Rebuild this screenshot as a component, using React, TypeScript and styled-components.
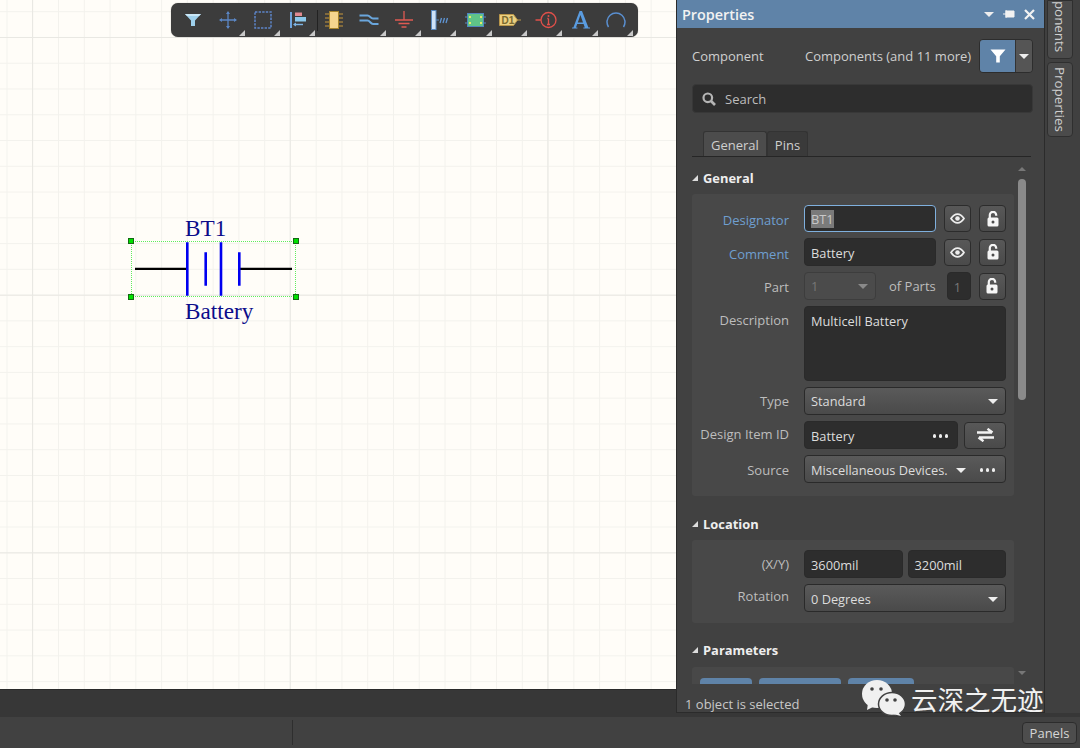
import React from "react";
import styled, { createGlobalStyle } from "styled-components";

const Global = createGlobalStyle`
  html, body { margin: 0; padding: 0; width: 1080px; height: 748px; overflow: hidden; background: #414141; }
  * { box-sizing: border-box; }
  body { font-family: "Open Sans", "Noto Sans", sans-serif; font-size: 13px; color: #d4d4d4; }
`;

const Page = styled.div`
  position: relative;
  width: 1080px;
  height: 748px;
  display: flex;
  flex-direction: column;
  overflow: hidden;
`;
const Main = styled.div`
  display: flex;
  height: 713px;
  flex: none;
`;
const LeftCol = styled.div`
  width: 676px;
  display: flex;
  flex-direction: column;
`;
const Canvas = styled.div`
  position: relative;
  height: 689px;
  flex: none;
  background-color: #fffdf8;
  background-image:
    linear-gradient(to right, #e9e8e3 1px, transparent 1px),
    linear-gradient(to bottom, #e9e8e3 1px, transparent 1px),
    linear-gradient(to right, #f3f2ed 1px, transparent 1px),
    linear-gradient(to bottom, #f3f2ed 1px, transparent 1px);
  background-size: 257.7px 257.7px, 257.7px 257.7px, 25.77px 25.77px, 25.77px 25.77px;
  background-position: 32px 37px, 32px 37px, 6.5px 11.2px, 6.5px 11.2px;
`;
const Toolbar = styled.div`
  position: absolute;
  left: 171px;
  top: 3px;
  width: 467px;
  height: 34px;
  display: flex;
  align-items: center;
  padding-left: 4px;
  background: #3c3c3c;
  border-radius: 7px;
  box-shadow: 0 0 1px #0006;
`;
const ToolSlot = styled.div<{ $corner?: boolean }>`
  position: relative;
  width: 35.3px;
  height: 34px;
  flex: none;
  display: flex;
  align-items: center;
  justify-content: center;
  &::after {
    content: "";
    display: ${(p) => (p.$corner ? "block" : "none")};
    position: absolute;
    right: 1px;
    bottom: 1px;
    border-style: solid;
    border-width: 0 0 6px 6px;
    border-color: transparent transparent #c8c8c8 transparent;
  }
`;
const ToolSep = styled.div`
  position: absolute;
  left: 146px;
  top: 7px;
  width: 1px;
  height: 21px;
  background: #222;
`;
const Selection = styled.div`
  position: absolute;
  left: 131px;
  top: 241px;
  width: 165px;
  height: 56px;
  background-image:
    repeating-linear-gradient(to right, #5fee5f 0 1px, transparent 1px 2px),
    repeating-linear-gradient(to right, #5fee5f 0 1px, transparent 1px 2px),
    repeating-linear-gradient(to bottom, #5fee5f 0 1px, transparent 1px 2px),
    repeating-linear-gradient(to bottom, #5fee5f 0 1px, transparent 1px 2px);
  background-size: 100% 1px, 100% 1px, 1px 100%, 1px 100%;
  background-position: left top, left bottom, left top, right top;
  background-repeat: no-repeat;
`;
const Handle = styled.span<{ $x: number; $y: number }>`
  position: absolute;
  left: ${(p) => p.$x}px;
  top: ${(p) => p.$y}px;
  width: 6px;
  height: 6px;
  background: #00e000;
  border: 1px solid #146814;
`;
const SchText = styled.span<{ $x: number; $y: number }>`
  position: absolute;
  left: ${(p) => p.$x}px;
  top: ${(p) => p.$y}px;
  font-family: "Liberation Serif", serif;
  font-size: 23.2px;
  line-height: 26px;
  color: #0c0c8a;
  white-space: nowrap;
`;
const BatteryDrawing = styled.svg`
  position: absolute;
  left: 130px;
  top: 236px;
`;
const DarkBar = styled.div`
  flex: 1;
  background: #373737;
  border-top: 1px solid #2a2a2a;
`;
const Panel = styled.div`
  width: 369px;
  display: flex;
  flex-direction: column;
  background: #414141;
  border-left: 1px solid #2b2b2b;
  border-right: 1px solid #2b2b2b;
  border-bottom: 1px solid #2b2b2b;
`;
const Header = styled.div`
  height: 28px;
  flex: none;
  display: flex;
  align-items: center;
  padding: 0 9px 0 5px;
  background: #5f83a8;
  font-weight: 600;
  font-size: 14.4px;
  color: #f2f2f2;
`;
const HeaderTitle = styled.span`
  flex: 1;
`;
const HeaderIcons = styled.div`
  display: flex;
  align-items: center;
  gap: 9px;
`;
const Body = styled.div`
  position: relative;
  flex: 1;
  min-height: 0;
  overflow: hidden;
  padding: 11px 11px 0 15px;
`;
const ComponentRow = styled.div`
  height: 34px;
  display: flex;
  align-items: center;
  margin-bottom: 11px;
`;
const RowLabel = styled.span`
  width: 113px;
  color: #cfcfcf;
  white-space: nowrap;
`;
const RowValue = styled.span`
  flex: 1;
  color: #cfcfcf;
  white-space: nowrap;
`;
const SplitFilter = styled.div`
  width: 54px;
  height: 34px;
  display: flex;
  border: 1px solid #2d2d2d;
  border-radius: 4px;
  overflow: hidden;
`;
const SplitMain = styled.div`
  flex: 1;
  display: flex;
  align-items: center;
  justify-content: center;
  background: #5f83a8;
`;
const SplitCaret = styled.div`
  width: 17px;
  display: flex;
  align-items: center;
  justify-content: center;
  background: #555;
  border-left: 1px solid #333;
`;
const SearchBox = styled.div`
  height: 29px;
  display: flex;
  align-items: center;
  gap: 9px;
  padding-left: 9px;
  background: #2d2d2d;
  border: 1px solid #383838;
  border-radius: 4px;
  color: #bdbdbd;
`;
const Tabs = styled.div`
  display: flex;
  height: 26px;
  margin: 18px 2px 0 0;
  padding-left: 11px;
  border-bottom: 1px solid #262626;
`;
const Tab = styled.div<{ $active?: boolean }>`
  display: flex;
  align-items: center;
  justify-content: center;
  padding: 1px 7px 0;
  height: 25px;
  background: ${(p) => (p.$active ? "#4c4c4c" : "#3a3a3a")};
  border: 1px solid #333;
  border-bottom: none;
  border-radius: 3px 3px 0 0;
  color: #cfcfcf;
`;
const Scroller = styled.div`
  position: absolute;
  right: 18px;
  top: 139px;
  width: 8px;
  height: 508px;
  display: flex;
  flex-direction: column;
  align-items: center;
`;
const ArrowUp = styled.span`
  width: 0;
  height: 0;
  border-left: 4px solid transparent;
  border-right: 4px solid transparent;
  border-bottom: 4px solid #777;
`;
const ArrowDown = styled.span`
  width: 0;
  height: 0;
  margin-top: auto;
  border-left: 4px solid transparent;
  border-right: 4px solid transparent;
  border-top: 4px solid #777;
`;
const Thumb = styled.div`
  width: 8px;
  height: 221px;
  margin-top: 8px;
  border-radius: 4px;
  background: #8a8a8a;
`;
const SectionHead = styled.div<{ $top: number }>`
  display: flex;
  align-items: center;
  gap: 5px;
  height: 18px;
  margin-top: ${(p) => p.$top}px;
  font-weight: 700;
  font-size: 12.9px;
  color: #eee;
`;
const Tri = styled.span`
  width: 0;
  height: 0;
  border-style: solid;
  border-width: 0 0 6px 6px;
  border-color: transparent transparent #ddd transparent;
`;
const Section = styled.div<{ $pad?: string }>`
  width: 322px;
  margin-top: 7px;
  padding: ${(p) => p.$pad || "11px 8px 13px 0"};
  background: #484848;
  border-radius: 3px;
  display: flex;
  flex-direction: column;
  gap: 6px;
`;
const Row = styled.div`
  display: grid;
  grid-template-columns: 97px 1fr;
  column-gap: 15px;
  align-items: center;
`;
const Label = styled.span<{ $accent?: boolean; $top?: boolean; $shift?: number }>`
  text-align: right;
  white-space: nowrap;
  color: ${(p) => (p.$accent ? "#6f9fd0" : "#bdbdbd")};
  align-self: ${(p) => (p.$top ? "start" : "center")};
  padding-top: ${(p) => (p.$top ? "5px" : "0")};
  margin-top: ${(p) => Math.max(p.$shift ?? 0, 0) * 2}px;
  margin-bottom: ${(p) => Math.max(-(p.$shift ?? 0), 0) * 2}px;
`;
const Controls = styled.div<{ $gap?: number }>`
  display: flex;
  align-items: center;
  gap: ${(p) => p.$gap ?? 8}px;
`;
const Input = styled.div<{ $w?: number; $focus?: boolean; $h?: number; $top?: boolean; $disabled?: boolean }>`
  ${(p) => (p.$w ? `width: ${p.$w}px; flex: none;` : "flex: 1;")}
  height: ${(p) => p.$h ?? 28}px;
  display: flex;
  align-items: ${(p) => (p.$top ? "flex-start" : "center")};
  padding: ${(p) => (p.$top ? "5px 6px" : p.$focus ? "0 6px" : "2px 6px 0")};
  font-size: 12.8px;
  background: #2d2d2d;
  border: 1px solid ${(p) => (p.$focus ? "#7fb0de" : "#2a2a2a")};
  border-radius: 4px;
  color: ${(p) => (p.$disabled ? "#777" : "#dcdcdc")};
  white-space: nowrap;
`;
const Selected = styled.span`
  background: #7a7a7a;
  color: #c8c8c8;
`;
const Select = styled.div<{ $w?: number; $disabled?: boolean; $drop?: boolean }>`
  ${(p) => (p.$w ? `width: ${p.$w}px; flex: none;` : "flex: 1;")}
  height: 28px;
  display: flex;
  align-items: center;
  justify-content: space-between;
  padding: ${(p) => (p.$drop ? "2px 7px 0 6px" : "0 7px 0 6px")};
  font-size: 12.8px;
  background: ${(p) => (p.$disabled ? "#4b4b4b" : "linear-gradient(#5a5a5a, #4a4a4a)")};
  border: 1px solid ${(p) => (p.$disabled ? "#3d3d3d" : "#2a2a2a")};
  border-radius: 4px;
  color: ${(p) => (p.$disabled ? "#777" : "#dcdcdc")};
  white-space: nowrap;
`;
const Caret = styled.span<{ $dim?: boolean }>`
  width: 0;
  height: 0;
  flex: none;
  border-left: 5.5px solid transparent;
  border-right: 5.5px solid transparent;
  border-top: 5.5px solid ${(p) => (p.$dim ? "#8a8a8a" : "#eee")};
`;
const IconBtn = styled.div<{ $w?: number }>`
  width: ${(p) => p.$w ?? 27}px;
  height: 27px;
  flex: none;
  display: flex;
  align-items: center;
  justify-content: center;
  background: linear-gradient(#585858, #4a4a4a);
  border: 1px solid #2c2c2c;
  border-radius: 4px;
`;
const OfParts = styled.span`
  color: #bdbdbd;
  margin-left: 5px;
  margin-right: 3px;
  white-space: nowrap;
`;
const Dots = styled.span`
  margin-left: auto;
  display: flex;
  gap: 2.5px;
  padding-right: 3px;
  & > i {
    width: 3.5px;
    height: 3.5px;
    border-radius: 50%;
    background: #eee;
  }
`;
const SourceText = styled.span`
  width: 138px;
  overflow: hidden;
`;
const SourceRight = styled.span`
  display: flex;
  align-items: center;
  gap: 12px;
  flex: 1;
  padding-left: 7px;
`;
const ParamButtons = styled.div`
  display: flex;
  gap: 7px;
  padding: 11px 0 0 8px;
`;
const ParamBtn = styled.div<{ $w: number }>`
  width: ${(p) => p.$w}px;
  height: 24px;
  flex: none;
  background: #5f83a8;
  border-radius: 4px;
`;
const ParamBox = styled.div`
  width: 322px;
  margin-top: 8px;
  height: 17px;
  background: #484848;
  border-radius: 3px 3px 0 0;
  overflow: hidden;
`;
const Footer = styled.div`
  height: 28px;
  flex: none;
  padding: 11px 0 0 8px;
  background: #414141;
  color: #c8c8c8;
  line-height: 18px;
`;
const Strip = styled.div`
  width: 35px;
  flex: none;
  display: flex;
  flex-direction: column;
  align-items: flex-start;
  padding-left: 2px;
  gap: 3px;
  background: #404040;
`;
const SideTab = styled.div<{ $h: number }>`
  width: 26px;
  height: ${(p) => p.$h}px;
  display: flex;
  justify-content: flex-end;
  align-items: center;
  overflow: hidden;
  background: #4b4b4b;
  border: 1px solid #2f2f2f;
  border-radius: 0 0 4px 4px;
  writing-mode: vertical-rl;
  font-size: 13.4px;
  color: #cfcfcf;
  padding-bottom: 6px;
  white-space: nowrap;
`;
const SideTabFull = styled(SideTab)`
  border-radius: 4px;
  justify-content: center;
  padding-bottom: 0;
`;
const Gutter = styled.div`
  height: 4px;
  flex: none;
  background: #373737;
`;
const StatusBar = styled.div`
  flex: 1;
  display: flex;
  align-items: center;
  justify-content: space-between;
  padding: 0 3px 0 292px;
  background: #414141;
`;
const StatusSep = styled.div`
  width: 1px;
  height: 25px;
  background: #2e2e2e;
`;
const PanelsBtn = styled.div`
  width: 55px;
  height: 22px;
  display: flex;
  align-items: center;
  justify-content: center;
  background: #4d4d4d;
  border: 1px solid #2c2c2c;
  border-radius: 4px;
  color: #d6d6d6;
`;
const Watermark = styled.div`
  position: absolute;
  left: 862px;
  top: 680px;
  display: flex;
  align-items: flex-start;
  gap: 5px;
  font-family: "Noto Sans CJK SC", sans-serif;
  font-size: 26.5px;
  line-height: 38px;
  color: #f1f1f1;
  white-space: nowrap;
`;

const Eye = () => (
  <svg width="15" height="11" viewBox="0 0 15 11">
    <path d="M1 5.5c2-3 4.2-4.4 6.5-4.4S12 2.5 14 5.5c-2 3-4.2 4.4-6.5 4.4S3 8.5 1 5.5z" fill="none" stroke="#eee" strokeWidth="1.7" />
    <circle cx="7.5" cy="5.5" r="2.3" fill="#eee" />
  </svg>
);
const Lock = () => (
  <svg width="12" height="16" viewBox="0 0 12 16">
    <path d="M2.8 7V4a3.2 3.2 0 0 1 6.4 0V4.8" fill="none" stroke="#f6f6f6" strokeWidth="2.2" />
    <rect x="0.5" y="6.5" width="11" height="9" rx="1.5" fill="#f6f6f6" />
    <circle cx="6" cy="11" r="1.5" fill="#4c4c4c" />
  </svg>
);
const Swap = () => (
  <svg width="17" height="14" viewBox="0 0 17 14">
    <path d="M0 4.5h15M10.5 0.8l5 3.7M2 9.5h15M1.5 9.5l5 3.7" fill="none" stroke="#f2f2f2" strokeWidth="2.4" />
  </svg>
);
const Funnel = ({ size = 16, fill = "#fff" }: { size?: number; fill?: string }) => (
  <svg width={size} height={size} viewBox="0 0 16 16">
    <path d="M0.5 1.5h15L9.8 8.2V14.5H6.2V8.2z" fill={fill} />
  </svg>
);
const SearchIcon = () => (
  <svg width="14" height="14" viewBox="0 0 14 14">
    <circle cx="5.8" cy="5.8" r="4.3" fill="none" stroke="#b5b5b5" strokeWidth="2.2" />
    <path d="M9 9l4 4" stroke="#b5b5b5" strokeWidth="2.6" />
  </svg>
);

const tools: { key: string; corner: boolean; icon: React.ReactNode }[] = [
  {
    key: "filter",
    corner: false,
    icon: (
      <svg width="18" height="16" viewBox="0 0 18 16">
        <path d="M1 2h16l-6 6.5V14H7V8.5z" fill="#9fd0ec" />
        <path d="M1 2h16l-2 2H3z" fill="#c9e6f6" />
      </svg>
    ),
  },
  {
    key: "cross",
    corner: true,
    icon: (
      <svg width="18" height="18" viewBox="0 0 18 18">
        <path d="M1 9h16M9 1v16" stroke="#5b86c4" strokeWidth="1.3" />
        <path d="M9 0l2 3H7zM9 18l-2-3h4zM0 9l3-2v4zM18 9l-3 2V7z" fill="#5b86c4" />
      </svg>
    ),
  },
  {
    key: "rect",
    corner: true,
    icon: (
      <svg width="18" height="18" viewBox="0 0 18 18">
        <rect x="1" y="1" width="16" height="16" fill="none" stroke="#5c84c8" strokeWidth="1.5" strokeDasharray="2.4 1.2" />
      </svg>
    ),
  },
  {
    key: "align",
    corner: true,
    icon: (
      <svg width="18" height="16" viewBox="0 0 18 16">
        <path d="M1 0v16" stroke="#6fa4dc" strokeWidth="2" />
        <rect x="5" y="0.5" width="7" height="3.5" fill="#e08a90" />
        <rect x="5" y="5" width="11" height="4.5" fill="#8cc8ea" />
        <path d="M4 12.5h9" stroke="#7cb4e4" strokeWidth="1.4" />
        <path d="M3 12.5l3-2v4z" fill="#7cb4e4" />
      </svg>
    ),
  },
  {
    key: "chip",
    corner: false,
    icon: (
      <svg width="20" height="18" viewBox="0 0 20 18">
        <path d="M1 3h4M1 7h4M1 11h4M1 15h4M15 3h4M15 7h4M15 11h4M15 15h4" stroke="#c8983c" strokeWidth="1" />
        <rect x="5.5" y="0.5" width="9" height="17" fill="#f5d48e" stroke="#a8842c" />
      </svg>
    ),
  },
  {
    key: "wires",
    corner: true,
    icon: (
      <svg width="20" height="14" viewBox="0 0 20 14">
        <path d="M0.5 2.5h8c2.5 0 3 3 5.5 3h5.5M0.5 7.5h8c2.5 0 3 3.5 5.5 3.5h5.5" fill="none" stroke="#6aa6dc" strokeWidth="2" />
      </svg>
    ),
  },
  {
    key: "gnd",
    corner: true,
    icon: (
      <svg width="20" height="18" viewBox="0 0 20 18">
        <path d="M10 0v9" stroke="#e05a52" strokeWidth="1.3" />
        <path d="M1 9h18M4.5 12.5h11M7.5 16h5" stroke="#e05a52" strokeWidth="1.5" />
      </svg>
    ),
  },
  {
    key: "bus",
    corner: true,
    icon: (
      <svg width="18" height="20" viewBox="0 0 18 20">
        <rect x="0.5" y="0.5" width="4.5" height="19" fill="#cfe2f6" stroke="#5a8ac0" />
        <path d="M5 10h3" stroke="#5a8ac0" />
        <path d="M9 13l1.5-5M12 13l1.5-5M15 13l1.5-5" stroke="#5f95d4" strokeWidth="1.3" />
      </svg>
    ),
  },
  {
    key: "sheet",
    corner: true,
    icon: (
      <svg width="21" height="14" viewBox="0 0 21 14">
        <path d="M0 4h3M0 10h3M18 4h3M18 10h3" stroke="#5a8ac0" />
        <rect x="2.5" y="0.5" width="16" height="13" fill="#5fc488" stroke="#4f86bf" />
        <path d="M4 3h2v2H4zM15 3h2v2h-2zM4 9h2v2H4zM15 9h2v2h-2z" fill="#e8e86a" />
      </svg>
    ),
  },
  {
    key: "port",
    corner: true,
    icon: (
      <svg width="22" height="14" viewBox="0 0 22 14">
        <path d="M0.5 1.5h14l4 5.5-4 5.5H0.5z" fill="#ecd080" stroke="#b8964a" />
        <path d="M18 7h4" stroke="#b8964a" />
        <text x="2.5" y="10.8" fontSize="10" fontWeight="700" fontFamily="Liberation Sans, sans-serif" fill="#7a6a30">D1</text>
      </svg>
    ),
  },
  {
    key: "info",
    corner: true,
    icon: (
      <svg width="22" height="18" viewBox="0 0 22 18">
        <circle cx="13.5" cy="9" r="7.5" fill="none" stroke="#e0504a" strokeWidth="1.3" />
        <path d="M0.5 9h5.5M13.5 7.5V13.5M12 13.5h3M12.3 7.5h1.2" stroke="#e0504a" strokeWidth="1.3" fill="none" />
        <circle cx="13.5" cy="5" r="1" fill="#e0504a" />
      </svg>
    ),
  },
  {
    key: "text",
    corner: true,
    icon: (
      <svg width="20" height="20" viewBox="0 0 20 20">
        <path d="M1 18.5h5.4v-1H5l1.2-3.4h6.4l1.2 3.4h-1.5v1H19v-1h-1.6L11 1H8.6L2.4 17.5H1zM6.8 12.4L9.4 5l2.6 7.4z" fill="#5a9ce0" />
      </svg>
    ),
  },
  {
    key: "arc",
    corner: true,
    icon: (
      <svg width="20" height="16" viewBox="0 0 20 16">
        <path d="M2.5 15A9 9 0 1 1 17.5 15" fill="none" stroke="#5a8fd0" strokeWidth="1.5" />
      </svg>
    ),
  },
];

export default function App() {
  return (
    <Page>
      <Global />
      <Main>
        <LeftCol>
          <Canvas>
            <Toolbar>
              {tools.map((t) => (
                <ToolSlot key={t.key} $corner={t.corner}>
                  {t.icon}
                </ToolSlot>
              ))}
              <ToolSep />
            </Toolbar>
            <BatteryDrawing width="170" height="66" viewBox="0 0 170 66">
              <path d="M5 32.8H57M110 32.8H162" stroke="#000" strokeWidth="2.2" />
              <path d="M57.3 6.3V59.7M91 6.3V59.7" stroke="#0000f0" strokeWidth="2.6" />
              <path d="M75.7 16.3V49.7M109.3 16.3V49.7" stroke="#0000f0" strokeWidth="2.6" />
            </BatteryDrawing>
            <SchText $x={185} $y={215}>BT1</SchText>
            <SchText $x={185} $y={298}>Battery</SchText>
            <Selection />
            <Handle $x={128} $y={238} />
            <Handle $x={293} $y={238} />
            <Handle $x={128} $y={294} />
            <Handle $x={293} $y={294} />
          </Canvas>
          <DarkBar />
        </LeftCol>
        <Panel>
          <Header>
            <HeaderTitle>Properties</HeaderTitle>
            <HeaderIcons>
              <Caret />
              <svg width="12" height="10" viewBox="0 0 12 10">
                <path d="M0 5h3M3 2h8v6H3zM3 1v8" fill="#f2f2f2" stroke="#f2f2f2" />
              </svg>
              <svg width="11" height="11" viewBox="0 0 11 11">
                <path d="M1 1l9 9M10 1l-9 9" stroke="#f2f2f2" strokeWidth="2.2" />
              </svg>
            </HeaderIcons>
          </Header>
          <Body>
            <ComponentRow>
              <RowLabel>Component</RowLabel>
              <RowValue>Components (and 11 more)</RowValue>
              <SplitFilter>
                <SplitMain><Funnel /></SplitMain>
                <SplitCaret><Caret /></SplitCaret>
              </SplitFilter>
            </ComponentRow>
            <SearchBox>
              <SearchIcon />
              <span>Search</span>
            </SearchBox>
            <Tabs>
              <Tab $active>General</Tab>
              <Tab>Pins</Tab>
            </Tabs>
            <Scroller>
              <ArrowUp />
              <Thumb />
              <ArrowDown />
            </Scroller>
            <SectionHead $top={12}><Tri />General</SectionHead>
            <Section>
              <Row>
                <Label $accent $shift={1}>Designator</Label>
                <Controls>
                  <Input $focus $h={27}><Selected>BT1</Selected></Input>
                  <IconBtn><Eye /></IconBtn>
                  <IconBtn><Lock /></IconBtn>
                </Controls>
              </Row>
              <Row>
                <Label $accent $shift={2}>Comment</Label>
                <Controls>
                  <Input>Battery</Input>
                  <IconBtn><Eye /></IconBtn>
                  <IconBtn><Lock /></IconBtn>
                </Controls>
              </Row>
              <Row>
                <Label $shift={1}>Part</Label>
                <Controls $gap={8}>
                  <Select $w={72} $disabled>1<Caret $dim /></Select>
                  <OfParts>of Parts</OfParts>
                  <Input $w={24} $disabled>1</Input>
                  <IconBtn><Lock /></IconBtn>
                </Controls>
              </Row>
              <Row>
                <Label $top>Description</Label>
                <Input $h={75} $top>Multicell Battery</Input>
              </Row>
              <Row>
                <Label>Type</Label>
                <Select>Standard<Caret /></Select>
              </Row>
              <Row>
                <Label $shift={-1}>Design Item ID</Label>
                <Controls $gap={6}>
                  <Input>Battery<Dots><i /><i /><i /></Dots></Input>
                  <IconBtn $w={42}><Swap /></IconBtn>
                </Controls>
              </Row>
              <Row>
                <Label $shift={1}>Source</Label>
                <Select $drop>
                  <SourceText>Miscellaneous Devices.</SourceText>
                  <SourceRight><Caret /><Dots><i /><i /><i /></Dots></SourceRight>
                </Select>
              </Row>
            </Section>
            <SectionHead $top={19}><Tri />Location</SectionHead>
            <Section $pad="10px 8px 11px 0">
              <Row>
                <Label>(X/Y)</Label>
                <Controls $gap={5}>
                  <Input>3600mil</Input>
                  <Input>3200mil</Input>
                </Controls>
              </Row>
              <Row>
                <Label $shift={-2}>Rotation</Label>
                <Select $drop>0 Degrees<Caret /></Select>
              </Row>
            </Section>
            <SectionHead $top={18}><Tri />Parameters</SectionHead>
            <ParamBox>
              <ParamButtons>
                <ParamBtn $w={52} />
                <ParamBtn $w={82} />
                <ParamBtn $w={66} />
              </ParamButtons>
            </ParamBox>
          </Body>
          <Footer>1 object is selected</Footer>
        </Panel>
        <Strip>
          <SideTab $h={59}>Components</SideTab>
          <SideTabFull $h={75}>Properties</SideTabFull>
        </Strip>
      </Main>
      <Gutter />
      <StatusBar>
        <StatusSep />
        <PanelsBtn>Panels</PanelsBtn>
      </StatusBar>
      <Watermark>
        <svg width="44" height="36" viewBox="0 0 44 36">
          <ellipse cx="15" cy="14" rx="15" ry="14" fill="#f0f0f0" />
          <path d="M6 23l-1 7 8-4z" fill="#f0f0f0" />
          <ellipse cx="30" cy="24" rx="13.5" ry="11.5" fill="#f0f0f0" stroke="#414141" strokeWidth="1.5" />
          <path d="M36 32l3 4-8-2z" fill="#f0f0f0" />
          <circle cx="10" cy="9" r="1.8" fill="#414141" />
          <circle cx="19" cy="9" r="1.8" fill="#414141" />
          <circle cx="25" cy="20" r="1.8" fill="#414141" />
          <circle cx="33" cy="20" r="1.8" fill="#414141" />
        </svg>
        <span>云深之无迹</span>
      </Watermark>
    </Page>
  );
}
